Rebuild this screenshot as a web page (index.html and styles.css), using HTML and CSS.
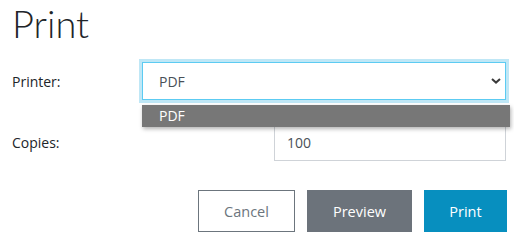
FILE: index.html
```html
<!DOCTYPE html>
<html lang="en">
<head>
<meta charset="utf-8">
<title>Print</title>
<link rel="stylesheet" href="styles.css">
</head>
<body>
<div class="page">
  <h1 class="title">Print</h1>
  <div class="form">
    <label class="label">Printer:</label>
    <div class="select-wrap">
      <div class="select">
        <span>PDF</span>
        <svg class="chev" width="10" height="6" viewBox="0 0 10 6"><path d="M1 1 L5 4.6 L9 1" fill="none" stroke="#3a3a3a" stroke-width="2"/></svg>
      </div>
      <div class="dropdown"><div class="option">PDF</div></div>
    </div>
    <label class="label">Copies:</label>
    <div class="input">100</div>
  </div>
  <div class="actions">
    <button class="btn btn-cancel">Cancel</button>
    <button class="btn btn-preview">Preview</button>
    <button class="btn btn-print">Print</button>
  </div>
</div>
</body>
</html>
```
FILE: styles.css
```css
body {
  margin: 0;
  background: #fff;
  font-family: "Open Sans", "Noto Sans", sans-serif;
  color: #212529;
}
.page {
  padding: 0 7px 0 12px;
}
.title {
  margin: 0;
  font-family: Lato, "Open Sans", sans-serif;
  font-size: 38px;
  line-height: 46px;
  font-weight: 300;
}
.form {
  margin-top: 16px;
  margin-right: 1px;
  display: grid;
  grid-template-columns: 130px 1fr;
  row-gap: 23px;
  align-items: center;
  font-size: 14px;
}
.label {
  font-size: 14px;
}
.select-wrap {
  position: relative;
}
.select {
  height: 38px;
  box-sizing: border-box;
  border: 1px solid #5ccbf2;
  box-shadow: 0 0 0 3px #bfe7f6;
  display: flex;
  align-items: center;
  justify-content: space-between;
  padding: 0 4px 0 16px;
  color: #495057;
  font-size: 14px;
  background: #fff;
}
.chev {
  display: block;
}
.dropdown {
  position: absolute;
  top: 43px;
  left: 0;
  right: -4px;
  background: #777777;
  box-shadow: 1px 2px 4px rgba(0,0,0,0.3);
  z-index: 2;
}
.option {
  height: 22px;
  line-height: 22px;
  padding-left: 17px;
  color: #fff;
  font-size: 14px;
}
.input {
  justify-self: end;
  width: 232px;
  height: 38px;
  box-sizing: border-box;
  border: 1px solid #cfd3d8;
  padding-left: 12px;
  display: flex;
  align-items: center;
  color: #495057;
  font-size: 14px;
}
.actions {
  margin-top: 29px;
  display: flex;
  justify-content: flex-end;
  gap: 12px;
}
.btn {
  height: 42px;
  box-sizing: border-box;
  border: 1px solid transparent;
  font-family: "Open Sans", "Noto Sans", sans-serif;
  font-size: 14.5px;
  padding: 0;
  color: #fff;
  border-radius: 0;
}
.btn-cancel {
  width: 97px;
  background: #fff;
  border-color: #6c757d;
  color: #6c757d;
}
.btn-preview {
  width: 105px;
  background: #6c737b;
  border-color: #6c737b;
}
.btn-print {
  width: 83px;
  background: #078fbf;
  border-color: #078fbf;
}
```
